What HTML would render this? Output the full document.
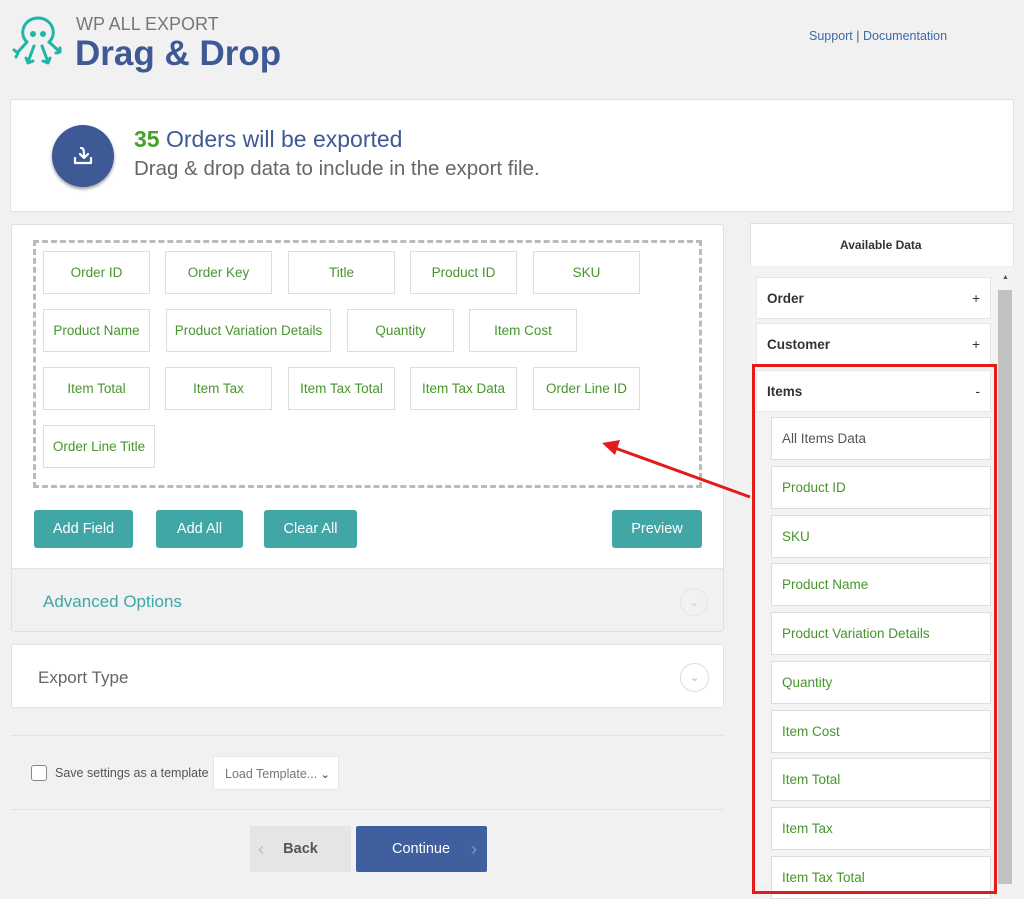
<!DOCTYPE html>
<html><head><meta charset="utf-8"><style>
*{box-sizing:border-box;margin:0;padding:0}
body{width:1024px;height:884px;overflow:hidden;background:#f1f1f1;font-family:"Liberation Sans",sans-serif;position:relative}
.a{position:absolute}
.f{position:absolute;height:43px;border:1px solid #ddd;background:#fff;color:#46962b;font-size:13.5px;display:flex;align-items:center;justify-content:center}
.b{position:absolute;top:510px;height:38px;background:#40a6a6;color:#fff;font-size:14.5px;border-radius:3px;display:flex;align-items:center;justify-content:center}
.s{position:absolute;left:771px;width:220px;height:43px;border:1px solid #ddd;background:#fff;color:#46962b;font-size:13.5px;padding-left:10px;display:flex;align-items:center}
.h{position:absolute;left:756px;width:235px;height:42px;background:#fff;border:1px solid #e6e6e6;font-weight:bold;font-size:13.5px;color:#333;padding:0 10px;display:flex;align-items:center;justify-content:space-between}
</style></head><body>
<svg class="a" style="left:10px;top:12px" width="58" height="60" viewBox="0 0 58 60" fill="none" stroke="#1fb5a8" stroke-width="3" stroke-linecap="round" stroke-linejoin="round">
<path d="M17 30 C8 22 14 6 28 6 C42 6 48 22 39 30"/><circle cx="23" cy="22" r="1.5" fill="#1fb5a8"/><circle cx="33" cy="22" r="1.5" fill="#1fb5a8"/>
<path d="M17 30 L8 40 M4 38 L8 41 L6 45"/><path d="M39 30 L50 40 M46 41 L50 40 L50 36"/><path d="M24 34 L18 50 M16 46 L18 51 L23 49"/><path d="M32 34 L38 50 M33 49 L38 51 L40 46"/></svg>
<div class="a" style="left:76px;top:14px;font-size:18px;color:#777">WP ALL EXPORT</div>
<div class="a" style="left:75px;top:34px;font-size:35px;font-weight:bold;color:#3d5a96">Drag &amp; Drop</div>
<div class="a" style="left:809px;top:29px;font-size:12.5px;color:#3d6aa8">Support <span style="color:#555">|</span> Documentation</div>
<div class="a" style="left:10px;top:99px;width:1004px;height:113px;background:#fff;border:1px solid #e0e0e0;border-radius:3px"></div>
<div class="a" style="left:52px;top:125px;width:62px;height:62px;border-radius:50%;background:#3d5a96;box-shadow:0 2px 3px #999"></div>
<svg class="a" style="left:71px;top:144px" width="24" height="24" viewBox="0 0 24 24" fill="none" stroke="#fff" stroke-width="2.2" stroke-linecap="round" stroke-linejoin="round"><path d="M10 4 C13 4 13 7 13 13 M9 10 L13 14 L17 10"/><path d="M4 14 V19 H20 V14"/></svg>
<div class="a" style="left:134px;top:126px;font-size:23px;color:#3d5a96"><b style="color:#46a02b">35</b> Orders will be exported</div>
<div class="a" style="left:134px;top:157px;font-size:20.5px;color:#666">Drag &amp; drop data to include in the export file.</div>
<div class="a" style="left:11px;top:224px;width:713px;height:408px;background:#fff;border:1px solid #e0e0e0;border-radius:3px"></div>
<div class="a" style="left:33px;top:240px;width:669px;height:248px;border:3px dashed #bbb"></div>
<div class="f" style="left:43px;top:251px;width:107px">Order ID</div>
<div class="f" style="left:165px;top:251px;width:107px">Order Key</div>
<div class="f" style="left:288px;top:251px;width:107px">Title</div>
<div class="f" style="left:410px;top:251px;width:107px">Product ID</div>
<div class="f" style="left:533px;top:251px;width:107px">SKU</div>
<div class="f" style="left:43px;top:309px;width:107px">Product Name</div>
<div class="f" style="left:166px;top:309px;width:165px">Product Variation Details</div>
<div class="f" style="left:347px;top:309px;width:107px">Quantity</div>
<div class="f" style="left:469px;top:309px;width:108px">Item Cost</div>
<div class="f" style="left:43px;top:367px;width:107px">Item Total</div>
<div class="f" style="left:165px;top:367px;width:107px">Item Tax</div>
<div class="f" style="left:288px;top:367px;width:107px">Item Tax Total</div>
<div class="f" style="left:410px;top:367px;width:107px">Item Tax Data</div>
<div class="f" style="left:533px;top:367px;width:107px">Order Line ID</div>
<div class="f" style="left:43px;top:425px;width:112px">Order Line Title</div>
<div class="b" style="left:34px;width:99px">Add Field</div>
<div class="b" style="left:156px;width:87px">Add All</div>
<div class="b" style="left:264px;width:93px">Clear All</div>
<div class="b" style="left:612px;width:90px">Preview</div>
<div class="a" style="left:12px;top:568px;width:711px;height:63px;background:#f1f1f1;border-top:1px solid #e4e4e4"></div>
<div class="a" style="left:43px;top:592px;font-size:17px;color:#40a6a6">Advanced Options</div>
<div class="a" style="left:680px;top:588px;width:28px;height:28px;border:1px solid #e4e4e4;border-radius:50%;color:#ccc;font-size:12px;text-align:center;line-height:26px">&#8964;</div>
<div class="a" style="left:11px;top:644px;width:713px;height:64px;background:#fff;border:1px solid #e0e0e0;border-radius:3px"></div>
<div class="a" style="left:38px;top:668px;font-size:17px;color:#666">Export Type</div>
<div class="a" style="left:680px;top:663px;width:29px;height:29px;border:1px solid #ddd;border-radius:50%;color:#bbb;font-size:12px;text-align:center;line-height:26px">&#8964;</div>
<div class="a" style="left:11px;top:735px;width:713px;height:1px;background:#e2e2e2"></div>
<div class="a" style="left:11px;top:809px;width:713px;height:1px;background:#e2e2e2"></div>
<div class="a" style="left:31px;top:765px;width:16px;height:16px;border:1px solid #888;border-radius:3px;background:#fff"></div>
<div class="a" style="left:55px;top:766px;font-size:12.5px;color:#555">Save settings as a template</div>
<div class="a" style="left:213px;top:756px;width:126px;height:34px;background:#fff;border:1px solid #e6e6e6;font-size:12.5px;color:#777;padding:10px 0 0 11px">Load Template... <span style="color:#333;font-size:11px">&#8964;</span></div>
<div class="a" style="left:250px;top:826px;width:101px;height:46px;background:#e5e5e5;color:#555;font-weight:bold;font-size:14.5px;line-height:46px;text-align:center"><span style="position:absolute;left:8px;color:#bbb;font-weight:normal;font-size:18px">&#8249;</span>Back</div>
<div class="a" style="left:356px;top:826px;width:131px;height:46px;background:#3f5f9f;color:#fff;font-size:14.5px;line-height:46px;padding-left:36px;border-radius:2px">Continue<span style="position:absolute;right:10px;color:#7f95c4;font-size:18px">&#8250;</span></div>
<div class="a" style="left:750px;top:223px;width:264px;height:661px;background:#fff;border:1px solid #e0e0e0"></div>
<div class="a" style="left:750px;top:266px;width:264px;height:1px;background:#eee"></div>
<div class="a" style="left:750px;top:267px;width:264px;height:617px;background:#f3f3f3"></div>
<div class="a" style="left:840px;top:238px;font-size:12px;font-weight:bold;color:#333">Available Data</div>
<div class="a" style="left:998px;top:290px;width:14px;height:594px;background:#c1c1c1"></div>
<div class="a" style="left:1002px;top:274px;font-size:7px;color:#555">&#9650;</div>
<div class="h" style="top:277px"><span>Order</span><span style="font-weight:normal">+</span></div>
<div class="h" style="top:323px"><span>Customer</span><span style="font-weight:normal">+</span></div>
<div class="h" style="top:370px"><span>Items</span><span style="font-weight:normal">-</span></div>
<div class="s" style="top:417px;color:#555">All Items Data</div>
<div class="s" style="top:466px">Product ID</div>
<div class="s" style="top:515px">SKU</div>
<div class="s" style="top:563px">Product Name</div>
<div class="s" style="top:612px">Product Variation Details</div>
<div class="s" style="top:661px">Quantity</div>
<div class="s" style="top:710px">Item Cost</div>
<div class="s" style="top:758px">Item Total</div>
<div class="s" style="top:807px">Item Tax</div>
<div class="s" style="top:856px">Item Tax Total</div>
<div class="a" style="left:752px;top:364px;width:245px;height:530px;border:3px solid #e21b1b"></div>
<svg class="a" style="left:0;top:0" width="1024" height="884"><line x1="750" y1="497" x2="615" y2="448" stroke="#e21b1b" stroke-width="3"/><polygon points="602,443 620,440 615,455" fill="#e21b1b"/></svg>
</body></html>
